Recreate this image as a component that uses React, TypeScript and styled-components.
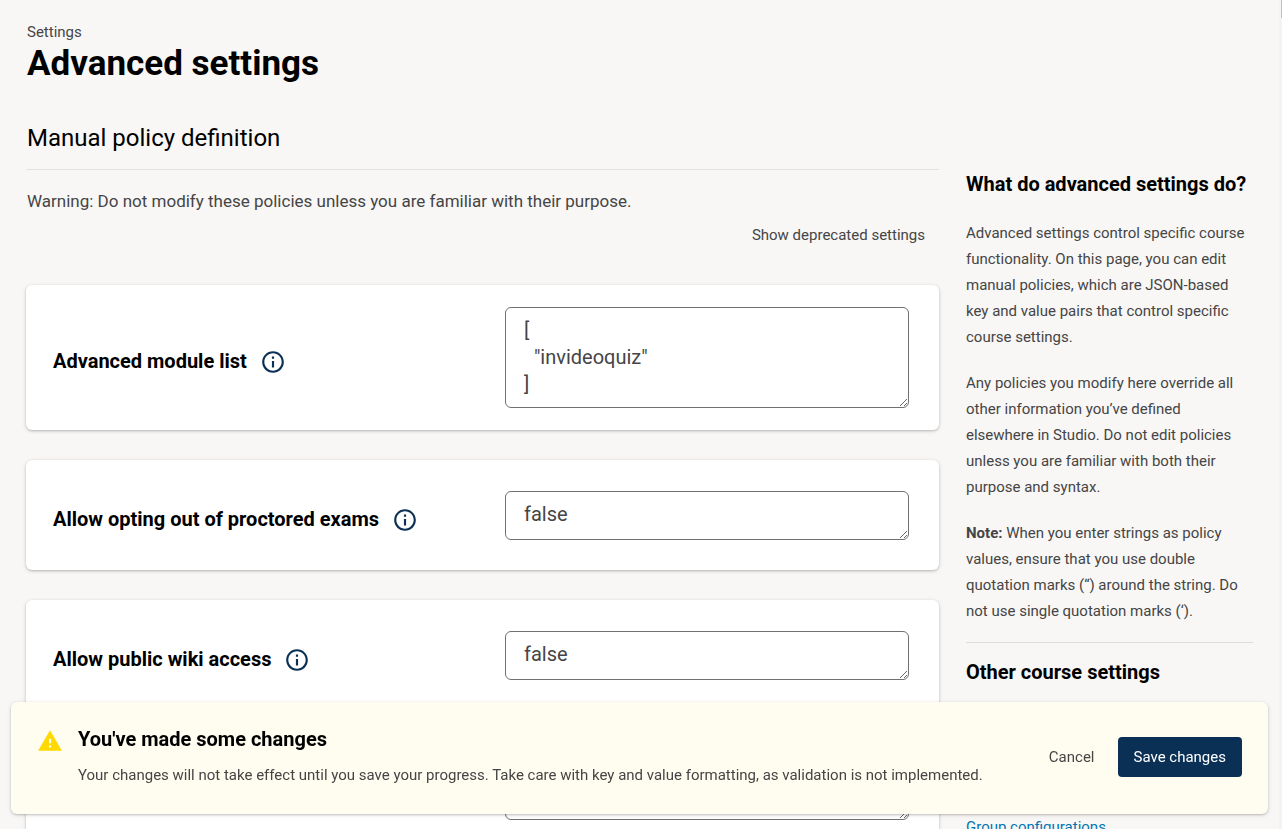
import React from "react";
import styled, { createGlobalStyle } from "styled-components";

const GlobalStyle = createGlobalStyle`
  *, *::before, *::after { box-sizing: border-box; }
  html { scrollbar-width: none; background: #f8f7f6; }
  body {
    margin: 0;
    color: #454545;
    background: #f8f7f6;
    font: 400 15px/26px Roboto, "Liberation Sans", sans-serif;
  }
  h1, h2, h3, p { margin: 0; }
  h1, h2, h3 { color: #000; }
  button, textarea { font-family: inherit; }
`;

const Page = styled.div`
  padding: 20px 29px 40px 26px;
`;

const Header = styled.header`
  padding-left: 1px;
  margin-bottom: 38px;
`;

const Eyebrow = styled.small`
  display: block;
  font-size: 15px;
  line-height: 24px;
`;

const Title = styled.h1`
  font-size: 35px;
  line-height: 40px;
  font-weight: 700;
`;

const Columns = styled.div`
  display: grid;
  grid-template-columns: minmax(0, 1fr) 287px;
  column-gap: 27px;
`;

const SectionTitle = styled.h2`
  padding: 0 0 15px 1px;
  border-bottom: 1px solid #e3e2e1;
  font-size: 24px;
  line-height: 32px;
  font-weight: 400;
`;

const Warning = styled.p`
  padding-left: 1px;
  margin-top: 16px;
  font-size: 17px;
  line-height: 30px;
`;

const Toolbar = styled.div`
  display: flex;
  justify-content: flex-end;
  padding: 0 14px;
  margin-bottom: 31px;
`;

const TextButton = styled.button`
  padding: 7px 0;
  border: 0;
  background: none;
  color: #454545;
  font-size: 15px;
  line-height: 24px;
  cursor: pointer;
`;

const CardList = styled.div`
  display: grid;
  row-gap: 30px;
`;

const Card = styled.section`
  display: grid;
  grid-template-columns: minmax(0, 1fr) 404px;
  align-items: center;
  min-height: 110px;
  padding: 22px 30px 22px 27px;
  border-radius: 6px;
  background: #fff;
  box-shadow: 0 1px 2px rgba(0, 0, 0, 0.15), 0 1px 4px rgba(0, 0, 0, 0.15);
`;

const CardLabel = styled.div`
  display: flex;
  align-items: center;
  gap: 13px;
  padding-top: 7px;
`;

const Label = styled.label`
  color: #000;
  font-size: 20px;
  line-height: 28px;
  font-weight: 700;
`;

const IconButton = styled.button`
  display: flex;
  padding: 2px 0 0;
  border: 0;
  background: none;
  color: #0a3055;
  cursor: pointer;
`;

const Value = styled.textarea<{ $lines: number }>`
  display: block;
  width: 100%;
  height: ${(p) => p.$lines * 26 + 23}px;
  padding: 9px 18px;
  border: 1px solid #707070;
  border-radius: 6px;
  background: #fff;
  color: #454545;
  font-size: 20px;
  line-height: 27px;
  overflow: hidden;
  resize: vertical;
`;

const Sidebar = styled.aside`
  padding-top: 48px;
`;

const SidebarTitle = styled.h3`
  font-size: 20px;
  line-height: 28px;
  font-weight: 700;
`;

const HelpText = styled.div`
  display: grid;
  row-gap: 20px;
  padding: 22px 4px 18px 0;
  margin-bottom: 15px;
  border-bottom: 1px solid #dddcdb;
`;

const LinkList = styled.nav`
  display: grid;
  row-gap: 12px;
  padding-top: 14px;
`;

const SideLink = styled.a`
  color: #0075b4;
  text-decoration: none;
`;

const Banner = styled.div`
  position: fixed;
  left: 11px;
  right: 14px;
  bottom: 15px;
  display: flex;
  align-items: center;
  padding: 23px 26px 26px;
  border-radius: 6px;
  background: #fffdf0;
  box-shadow: 0 1px 2px rgba(0, 0, 0, 0.15), 0 1px 4px rgba(0, 0, 0, 0.15);
`;

const BannerIcon = styled.span`
  display: flex;
  align-self: flex-start;
  padding-top: 3px;
  margin-right: 15px;
  color: #ffd900;
`;

const BannerBody = styled.div`
  flex: 1;
`;

const BannerTitle = styled.h3`
  margin-bottom: 9px;
  font-size: 20px;
  line-height: 28px;
  font-weight: 700;
`;

const BannerActions = styled.div`
  display: flex;
  align-items: center;
  gap: 23px;
`;

const SaveButton = styled.button`
  padding: 8px 16px;
  border: 0;
  border-radius: 4px;
  background: #0a3055;
  color: #fff;
  font-size: 15px;
  line-height: 24px;
  cursor: pointer;
`;

const ScrollTrack = styled.div`
  position: fixed;
  top: 0;
  right: 0;
  bottom: 0;
  display: flex;
  justify-content: flex-end;
  width: 3px;
  background: #f3f3f3;
`;

const ScrollThumb = styled.div`
  width: 1px;
  height: 18px;
  background: #c1c1bf;
`;

const InfoIcon = () => (
  <svg width="26" height="26" viewBox="0 0 24 24" fill="currentColor" aria-hidden="true">
    <path d="M11 7h2v2h-2zm0 4h2v6h-2zm1-9C6.48 2 2 6.48 2 12s4.480 10 10 10 10-4.480 10-10S17.520 2 12 2zm0 18c-4.410 0-8-3.590-8-8s3.590-8 8-8 8 3.590 8 8-3.590 8-8 8z" />
  </svg>
);

const WarningIcon = () => (
  <svg width="26" height="26" viewBox="0 0 24 24" fill="currentColor" aria-hidden="true">
    <path d="M1 21h22L12 2 1 21zm12-3h-2v-2h2v2zm0-4h-2v-4h2v4z" />
  </svg>
);

const settings = [
  { id: "advanced-modules", label: "Advanced module list", value: '[\n  "invideoquiz"\n]', lines: 3 },
  { id: "proctoring-opt-out", label: "Allow opting out of proctored exams", value: "false", lines: 1 },
  { id: "public-wiki", label: "Allow public wiki access", value: "false", lines: 1 },
  { id: "anonymous-posts", label: "Allow anonymous discussion posts", value: "true", lines: 1 },
];

export default function App() {
  return (
    <>
      <GlobalStyle />
      <Page>
        <Header>
          <Eyebrow>Settings</Eyebrow>
          <Title>Advanced settings</Title>
        </Header>
        <Columns>
          <main>
            <SectionTitle>Manual policy definition</SectionTitle>
            <Warning>Warning: Do not modify these policies unless you are familiar with their purpose.</Warning>
            <Toolbar>
              <TextButton type="button">Show deprecated settings</TextButton>
            </Toolbar>
            <CardList>
              {settings.map((s) => (
                <Card key={s.id}>
                  <CardLabel>
                    <Label htmlFor={s.id}>{s.label}</Label>
                    <IconButton type="button" aria-label={`About ${s.label}`}>
                      <InfoIcon />
                    </IconButton>
                  </CardLabel>
                  <Value id={s.id} $lines={s.lines} defaultValue={s.value} spellCheck={false} />
                </Card>
              ))}
            </CardList>
          </main>
          <Sidebar>
            <SidebarTitle>What do advanced settings do?</SidebarTitle>
            <HelpText>
              <p>
                Advanced settings control specific course functionality. On this page, you can edit manual policies,
                which are JSON-based key and value pairs that control specific course settings.
              </p>
              <p>
                Any policies you modify here override all other information you’ve defined elsewhere in Studio. Do not
                edit policies unless you are familiar with both their purpose and syntax.
              </p>
              <p>
                <strong>Note:</strong> When you enter strings as policy values, ensure that you use double quotation
                marks (“) around the string. Do not use single quotation marks (‘).
              </p>
            </HelpText>
            <SidebarTitle>Other course settings</SidebarTitle>
            <LinkList aria-label="Other course settings">
              <SideLink href="#details">Details &amp; schedule</SideLink>
              <SideLink href="#grading">Grading</SideLink>
              <SideLink href="#team">Course team</SideLink>
              <SideLink href="#groups">Group configurations</SideLink>
            </LinkList>
          </Sidebar>
        </Columns>
      </Page>
      <ScrollTrack aria-hidden="true">
        <ScrollThumb />
      </ScrollTrack>
      <Banner role="alert">
        <BannerIcon>
          <WarningIcon />
        </BannerIcon>
        <BannerBody>
          <BannerTitle>You've made some changes</BannerTitle>
          <p>
            Your changes will not take effect until you save your progress. Take care with key and value formatting, as
            validation is not implemented.
          </p>
        </BannerBody>
        <BannerActions>
          <TextButton type="button">Cancel</TextButton>
          <SaveButton type="button">Save changes</SaveButton>
        </BannerActions>
      </Banner>
    </>
  );
}
